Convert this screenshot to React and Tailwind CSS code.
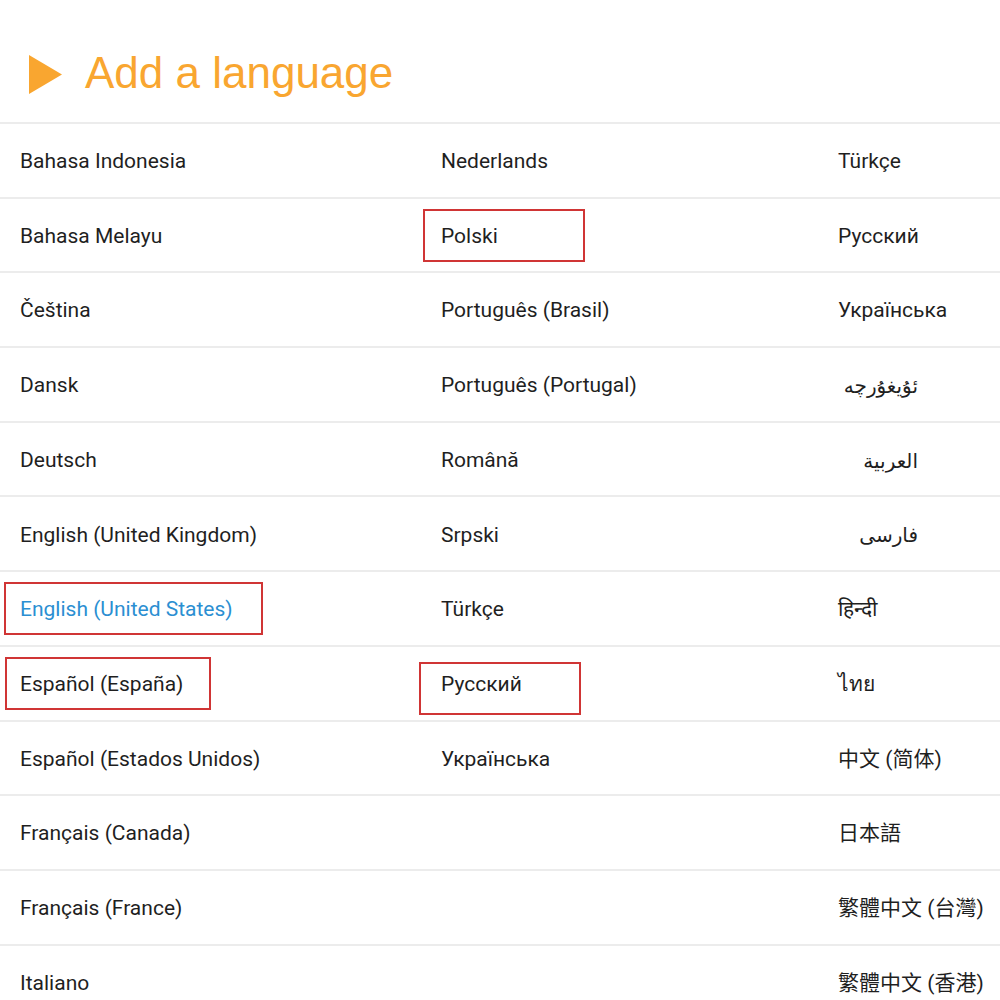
import React from "react";

const col1 = [
  "Bahasa Indonesia",
  "Bahasa Melayu",
  "Čeština",
  "Dansk",
  "Deutsch",
  "English (United Kingdom)",
  "English (United States)",
  "Español (España)",
  "Español (Estados Unidos)",
  "Français (Canada)",
  "Français (France)",
  "Italiano",
];

const col2 = [
  "Nederlands",
  "Polski",
  "Português (Brasil)",
  "Português (Portugal)",
  "Română",
  "Srpski",
  "Türkçe",
  "Русский",
  "Українська",
  "",
  "",
  "",
];

const col3 = [
  { label: "Türkçe" },
  { label: "Русский" },
  { label: "Українська" },
  { label: "ئۇيغۇرچە", rtl: true },
  { label: "العربية", rtl: true },
  { label: "فارسی", rtl: true },
  { label: "हिन्दी" },
  { label: "ไทย" },
  { label: "中文 (简体)" },
  { label: "日本語" },
  { label: "繁體中文 (台灣)" },
  { label: "繁體中文 (香港)" },
];

// red annotation boxes, keyed by "col-row"
const marks = {
  "1-6": "left-[4px] top-[10px] w-[259px] h-[53px]",
  "1-7": "left-[5px] top-[10px] w-[206px] h-[53px]",
  "2-1": "left-[5px] top-[10px] w-[162px] h-[53px]",
  "2-7": "left-[1px] top-[15px] w-[162px] h-[53px]",
};

function Cell({ col, row, children, className = "" }) {
  const mark = marks[`${col}-${row}`];
  return (
    <div className={`relative h-[74.7px] border-t-2 border-[#ececec] flex items-center pt-[3px] ${className}`}>
      {children}
      {mark && <div className={`absolute border-2 border-[#d03535] ${mark}`}></div>}
    </div>
  );
}

export default function App() {
  return (
    <div className="w-[1000px] h-[1000px] overflow-hidden bg-white font-['Roboto','Noto_Sans_CJK_SC',sans-serif] text-[21px] text-[#1f1f1f]">
      <div className="h-[122px] flex items-start pl-[29px]">
        <svg width="33" height="39" viewBox="0 0 33 39" className="mt-[55px]">
          <polygon points="0,0 33,19.5 0,39" fill="#f9a630" />
        </svg>
        <h1 className="ml-[23px] mt-[51px] font-['Liberation_Sans',Arial,sans-serif] text-[44px] text-[#f9a630] leading-none">
          Add a language
        </h1>
      </div>

      <div className="grid grid-cols-[418px_397px_185px]">
        <div>
          {col1.map((name, i) => (
            <Cell key={i} col={1} row={i} className="pl-[20px]">
              <span className={i === 6 ? "text-[#2b8fd2]" : ""}>{name}</span>
            </Cell>
          ))}
        </div>
        <div>
          {col2.map((name, i) => (
            <Cell key={i} col={2} row={i} className="pl-[23px]">
              <span>{name}</span>
            </Cell>
          ))}
        </div>
        <div>
          {col3.map((item, i) => (
            <Cell key={i} col={3} row={i} className="pl-[23px]">
              {item.rtl ? (
                <span dir="rtl" className="w-[80px] text-right font-['DejaVu_Sans',sans-serif] text-[20px]">
                  {item.label}
                </span>
              ) : (
                <span>{item.label}</span>
              )}
            </Cell>
          ))}
        </div>
      </div>
    </div>
  );
}
